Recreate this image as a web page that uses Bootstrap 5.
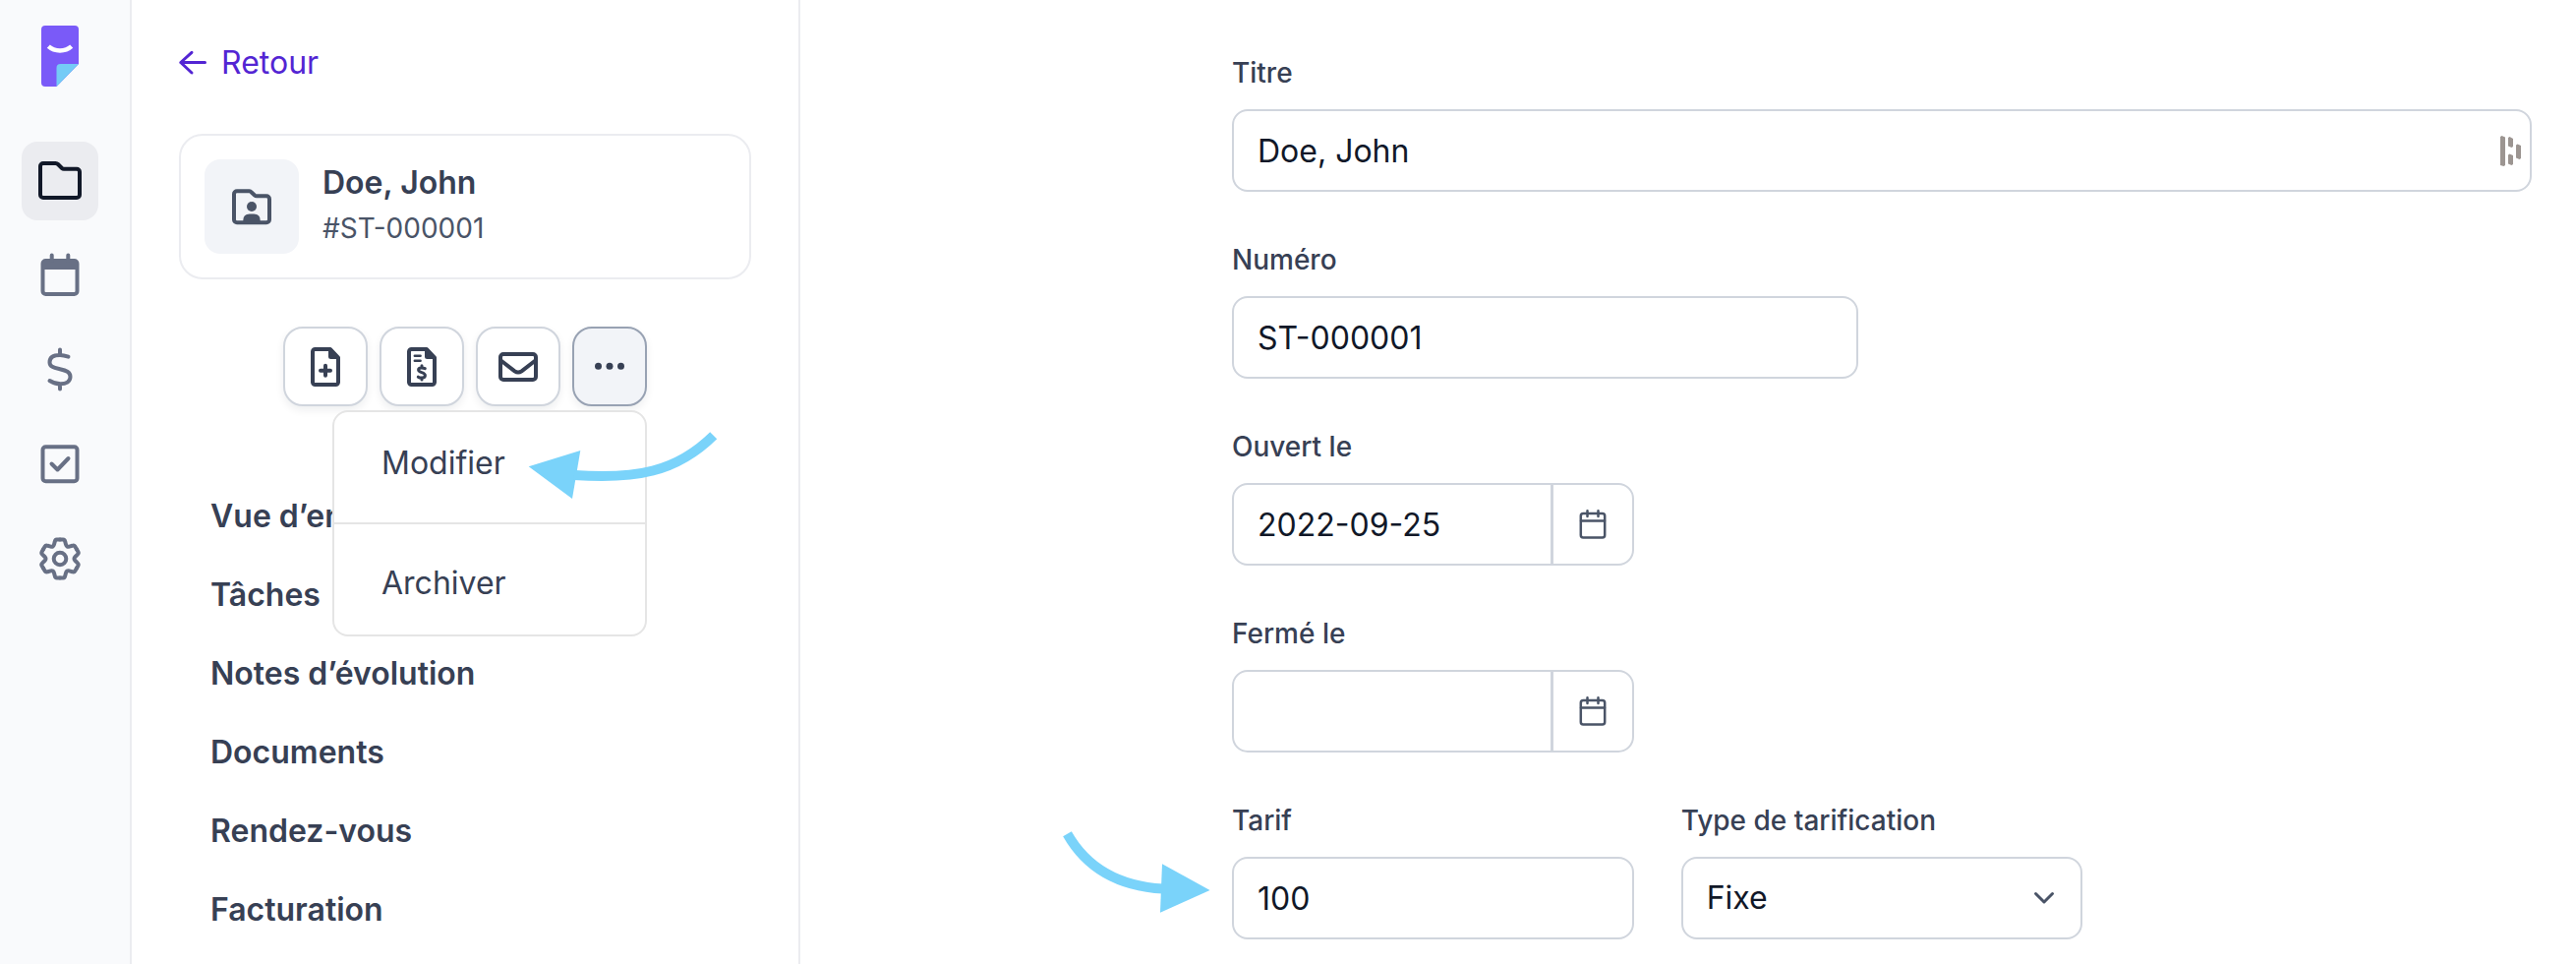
<!DOCTYPE html>
<html lang="fr">
<head>
<meta charset="utf-8">
<meta name="viewport" content="width=device-width, initial-scale=1">
<title>Doe, John – Modifier</title>
<link href="https://cdn.jsdelivr.net/npm/bootstrap@5.3.0/dist/css/bootstrap.min.css" rel="stylesheet">
<style>
  :root { --ink: #111828; --slate: #374054; --soft: #4a5467; --muted: #687085; --line: #d0d5dd; --hair: #ebecf0; }
  body { font-family: Inter, "Liberation Sans", sans-serif; font-size: 32px; line-height: 48px; color: var(--slate); background: #fff; }
  svg { display: block; overflow: visible; }
  .stroke { fill: none; stroke: currentColor; stroke-width: 4; stroke-linecap: round; stroke-linejoin: round; }
  .stroke-arrow { stroke-width: 3; }

  .rail { width: 134px; padding: 26px 32px 26px 22px; background: #f9fafc; border-right: 2px solid var(--hair); }
  .rail-logo { margin-bottom: 56px; padding-left: 20px; }
  .rail-link { height: 80px; color: var(--muted); border-radius: 16px; }
  .rail-link.active { background: #ebecf0; color: var(--ink); }

  .side { width: 680px; padding: 40px 48px; border-right: 2px solid var(--hair); }
  .back { color: #5325d3; gap: 15px; margin-bottom: 48px; }
  .client { border: 2px solid var(--hair); border-radius: 24px; padding: 24px; gap: 24px; margin-bottom: 48px; }
  .client-tile { width: 96px; height: 96px; border-radius: 16px; background: #f2f4f8; color: var(--soft); }
  .client-name { font-size: 32px; line-height: 48px; font-weight: 600; }
  .client-ref { font-size: 28px; line-height: 44px; color: var(--soft); }

  .tools { gap: 12px; margin-bottom: 72px; }
  .tool { width: 86px; height: 81px; padding: 0; border: 2px solid var(--line); border-radius: 20px; background: #fff; color: var(--slate); box-shadow: 0 4px 8px rgba(17, 24, 39, .07); }
  .tool-more { width: 76px; background: #f2f4f8; border-color: #98a2b3; }
  .tool-menu { top: 85px; right: 0; width: 320px; padding: 0; margin: 0; border: 2px solid #e5e5e5; border-radius: 16px; background: #fff; font-size: 32px; }
  .tool-menu .dropdown-item { padding: 28px 48px; line-height: 48px; color: var(--slate); }
  .tool-menu .dropdown-divider { margin: 8px 0; border-top: 2px solid #e5e5e5; opacity: 1; }
  .hint { position: absolute; z-index: 1100; color: #7ad3fa; pointer-events: none; }
  .hint-menu { top: 25px; right: -72px; }
  .hint-rate { top: -26px; left: -173px; }

  .side-link { padding: 16px 32px; line-height: 48px; font-weight: 600; color: var(--slate); }

  .sheet { padding: 55px 45px 0 439px; }
  .sheet .row { --bs-gutter-x: 48px; }
  .field { margin-bottom: 50px; }
  .form-label { font-size: 28px; line-height: 38px; font-weight: 500; margin-bottom: 18px; display: block; }
  .form-control, .form-select { height: 84px; padding: 0 24px; border: 2px solid var(--line); border-radius: 16px; font-size: 32px; line-height: 48px; color: var(--ink); }
  .form-select { background-size: 22px 14px; background-position: right 26px center;
    --bs-form-select-bg-img: url("data:image/svg+xml,%3csvg xmlns='http://www.w3.org/2000/svg' viewBox='0 0 22 14'%3e%3cpath fill='none' stroke='%234a5467' stroke-width='3' stroke-linecap='round' stroke-linejoin='round' d='M2.500 2.500 11 11l8.500-8.500'/%3e%3c/svg%3e"); }
  .input-group > .pick.btn { width: 84px; padding: 0; margin-left: -2px; border: 2px solid var(--line); border-radius: 0 16px 16px 0; color: var(--soft); background: #fff; }
  .pick .stroke { stroke-width: 2.500px; }
  .filler { top: 27px; right: 10px; color: #9c9591; }
  .rule-lines { stroke-width: 2.500px; }
  .coin { stroke-width: 3px; }
</style>
</head>
<body>
<div class="d-flex min-vh-100">

  <nav class="rail flex-shrink-0 d-flex flex-column" aria-label="Navigation principale">
    <a class="rail-logo" href="#" aria-label="Accueil">
      <svg width="38" height="62" viewBox="0 0 38 62"><path fill="#7a5af8" d="M4 0H34a4 4 0 0 1 4 4V39L15.500 62H4a4 4 0 0 1-4-4V4a4 4 0 0 1 4-4z"/><path fill="#74cbf6" d="M38 39H19.500a4 4 0 0 0-4 4V62z"/><path fill="none" stroke="#fff" stroke-width="4.500" d="M7.300 21.200Q12 25.500 19 25.500T30.700 21.200"/></svg>
    </a>
    <div class="d-flex flex-column gap-3">
      <a class="rail-link active d-flex align-items-center justify-content-center" href="#" aria-label="Dossiers">
        <svg class="stroke" width="48" height="48"><path d="M7 6H19.500q1.500 0 2.500 1l4 4q.8.800 2 .800H41a3 3 0 0 1 3 3V38a3 3 0 0 1-3 3H7a3 3 0 0 1-3-3V9a3 3 0 0 1 3-3z"/></svg>
      </a>
      <a class="rail-link d-flex align-items-center justify-content-center" href="#" aria-label="Calendrier">
        <svg class="stroke" width="48" height="48"><rect x="6.500" y="9" width="35" height="34" rx="3"/><path fill="currentColor" stroke="none" d="M6 9h36v9H6z"/><path d="M15.700 3.500V9M32.300 3.500V9"/></svg>
      </a>
      <a class="rail-link d-flex align-items-center justify-content-center" href="#" aria-label="Finances">
        <svg class="stroke" width="48" height="48"><path d="M32.500 10.700C29 9.500 26.500 9 24 9C17 9 13.500 11.500 13.500 16.200C13.500 21 18 21.800 24 23.200C30 24.600 34.500 26 34.500 31C34.500 36 30 38.300 24.500 38.300C20.500 38.300 16.500 37 13.500 35M24 3.500V9M24 38.300V43.500"/></svg>
      </a>
      <a class="rail-link d-flex align-items-center justify-content-center" href="#" aria-label="Tâches">
        <svg class="stroke" width="48" height="48"><rect x="6.500" y="6.300" width="35" height="35" rx="3"/><path d="M15.500 23.500l6 6L32.500 18"/></svg>
      </a>
      <a class="rail-link d-flex align-items-center justify-content-center" href="#" aria-label="Paramètres">
        <svg class="stroke" width="48" height="48" viewBox="-24 -24 48 48"><defs><path id="tooth" d="M0 -19.500H3.200Q4.800 -19.500 5.200 -17.400L6 -14.400Q6.730 -11.660 9.470 -12.400L12.470 -13.200Q14.300 -13.900 15.270 -12.500L16.880 -9.750"/></defs><use href="#tooth"/><use href="#tooth" transform="rotate(60)"/><use href="#tooth" transform="rotate(120)"/><use href="#tooth" transform="rotate(180)"/><use href="#tooth" transform="rotate(240)"/><use href="#tooth" transform="rotate(300)"/><circle r="6.300"/></svg>
      </a>
    </div>
  </nav>

  <aside class="side flex-shrink-0">
    <a class="back d-flex align-items-center text-decoration-none" href="#">
      <svg class="stroke stroke-arrow" width="28" height="24"><path d="M26.500 11.500H1.800M13 1.300 1.800 11.500 13 22"/></svg>
      <span>Retour</span>
    </a>

    <section class="client d-flex">
      <div class="client-tile flex-shrink-0 d-flex align-items-center justify-content-center">
        <svg class="stroke" width="40" height="40"><path d="M5 4.200H17.500q1 0 2 1l3.500 3.300q.8.700 2 .7H35a3 3 0 0 1 3 3V33.200a3 3 0 0 1-3 3H5a3 3 0 0 1-3-3V7.200a3 3 0 0 1 3-3z"/><g fill="currentColor" stroke="none"><circle cx="20" cy="20" r="5"/><path d="M11.300 36v-2q0-6.500 6.500-6.500h4.400q6.500 0 6.500 6.500v2z"/></g></svg>
      </div>
      <div>
        <div class="client-name">Doe, John</div>
        <div class="client-ref">#ST-000001</div>
      </div>
    </section>

    <div class="tools d-flex justify-content-center">
      <button type="button" class="tool btn d-flex align-items-center justify-content-center" aria-label="Nouvelle note">
        <svg class="stroke" width="30" height="40"><path d="M4.500 2H20L28 10.500V35.500a2.500 2.500 0 0 1-2.500 2.500H4.500A2.500 2.500 0 0 1 2 35.500V4.500A2.500 2.500 0 0 1 4.500 2zM15 18.700v10M10 23.700h10"/><path fill="currentColor" stroke="none" d="M18 1h3l8.500 9v2H20.500a2.500 2.500 0 0 1-2.500-2.500z"/></svg>
      </button>
      <button type="button" class="tool btn d-flex align-items-center justify-content-center" aria-label="Nouvelle facture">
        <svg class="stroke" width="30" height="40"><path d="M4.500 2H20L28 10.500V35.500a2.500 2.500 0 0 1-2.500 2.500H4.500A2.500 2.500 0 0 1 2 35.500V4.500A2.500 2.500 0 0 1 4.500 2z"/><path fill="currentColor" stroke="none" d="M18 1h3l8.500 9v2H20.500a2.500 2.500 0 0 1-2.500-2.500z"/><path class="rule-lines" d="M7.800 8.800h5.800M7.800 13.800h5.800"/><path class="coin" d="M18.300 21.700C16.500 20.800 11.600 20.200 11.600 23C11.600 26.200 18.400 25.200 18.400 28.700C18.400 31.800 13 31.400 11.300 30.200M15 18.700v2M15 31.300v1.700"/></svg>
      </button>
      <button type="button" class="tool btn d-flex align-items-center justify-content-center" aria-label="Envoyer un courriel">
        <svg class="stroke" width="40" height="30"><rect x="2" y="2" width="36" height="26" rx="3"/><path d="M2.500 8.500 16.500 19.300q3.500 2.500 7 0L37.500 8.500"/></svg>
      </button>
      <div class="dropdown">
        <button type="button" class="tool tool-more btn d-flex align-items-center justify-content-center" aria-label="Plus d’actions" aria-expanded="true">
          <svg width="30" height="8" fill="currentColor"><circle cx="3.500" cy="3.300" r="3.500"/><circle cx="15" cy="3.300" r="3.500"/><circle cx="26.500" cy="3.300" r="3.500"/></svg>
        </button>
        <ul class="tool-menu dropdown-menu show">
          <li><a class="dropdown-item" href="#">Modifier</a></li>
          <li><hr class="dropdown-divider"></li>
          <li><a class="dropdown-item" href="#">Archiver</a></li>
          <li class="hint hint-menu" aria-hidden="true">
            <svg width="192" height="66"><path fill="currentColor" d="M1.700 30.300 54.300 14 46 63z"/><path fill="none" stroke="currentColor" stroke-width="10" d="M48 39C110 43.500 152 36 189.700-1.300"/></svg>
          </li>
        </ul>
      </div>
    </div>

    <nav class="nav flex-column" aria-label="Dossier">
      <a class="side-link nav-link" href="#">Vue d’ensemble</a>
      <a class="side-link nav-link" href="#">Tâches</a>
      <a class="side-link nav-link" href="#">Notes d’évolution</a>
      <a class="side-link nav-link" href="#">Documents</a>
      <a class="side-link nav-link" href="#">Rendez-vous</a>
      <a class="side-link nav-link" href="#">Facturation</a>
    </nav>
  </aside>

  <main class="flex-grow-1">
    <form class="sheet">
      <div class="row">
        <div class="col-12 field">
          <label class="form-label" for="titre">Titre</label>
          <div class="position-relative">
            <input class="form-control" id="titre" type="text" value="Doe, John">
            <svg class="filler position-absolute" width="22" height="32" fill="currentColor" aria-hidden="true"><path d="M0 1 1.500 0 5 1.500V30L3.500 31 0 30zM8 2l1.500-1L13 3v8l-1.500 1L8 10.500zM8 19.500l1.500-1L13 20v9L11.500 30 8 28.500zM16 9.500 17.500 8.500 21 10v13l-1.500 1L16 22.500z"/></svg>
          </div>
        </div>
      </div>
      <div class="row">
        <div class="col-6 field">
          <label class="form-label" for="numero">Numéro</label>
          <input class="form-control" id="numero" type="text" value="ST-000001">
        </div>
      </div>
      <div class="row">
        <div class="col-4 field">
          <label class="form-label" for="ouvert">Ouvert le</label>
          <div class="input-group">
            <input class="form-control" id="ouvert" type="text" value="2022-09-25">
            <button type="button" class="pick btn d-flex align-items-center justify-content-center" aria-label="Choisir la date d’ouverture">
              <svg class="stroke" width="28" height="30"><rect x="1.800" y="4" width="24.400" height="24.500" rx="2.500"/><path d="M2 11.500h24M8.500 1.300v5.700M19.500 1.300v5.700"/></svg>
            </button>
          </div>
        </div>
      </div>
      <div class="row">
        <div class="col-4 field">
          <label class="form-label" for="ferme">Fermé le</label>
          <div class="input-group">
            <input class="form-control" id="ferme" type="text" value="">
            <button type="button" class="pick btn d-flex align-items-center justify-content-center" aria-label="Choisir la date de fermeture">
              <svg class="stroke" width="28" height="30"><rect x="1.800" y="4" width="24.400" height="24.500" rx="2.500"/><path d="M2 11.500h24M8.500 1.300v5.700M19.500 1.300v5.700"/></svg>
            </button>
          </div>
        </div>
      </div>
      <div class="row">
        <div class="col-4">
          <label class="form-label" for="tarif">Tarif</label>
          <div class="position-relative">
            <input class="form-control" id="tarif" type="text" value="100">
            <span class="hint hint-rate" aria-hidden="true">
              <svg width="152" height="84"><path fill="currentColor" d="M150.600 60 102 33.300 100 82.700z"/><path fill="none" stroke="currentColor" stroke-width="10" d="M5.500 2.700C25 37 58 56 103 58.500"/></svg>
            </span>
          </div>
        </div>
        <div class="col-4">
          <label class="form-label" for="type">Type de tarification</label>
          <select class="form-select" id="type"><option selected>Fixe</option><option>Horaire</option></select>
        </div>
      </div>
    </form>
  </main>
</div>
<script src="https://cdn.jsdelivr.net/npm/bootstrap@5.3.0/dist/js/bootstrap.bundle.min.js"></script>
</body>
</html>
